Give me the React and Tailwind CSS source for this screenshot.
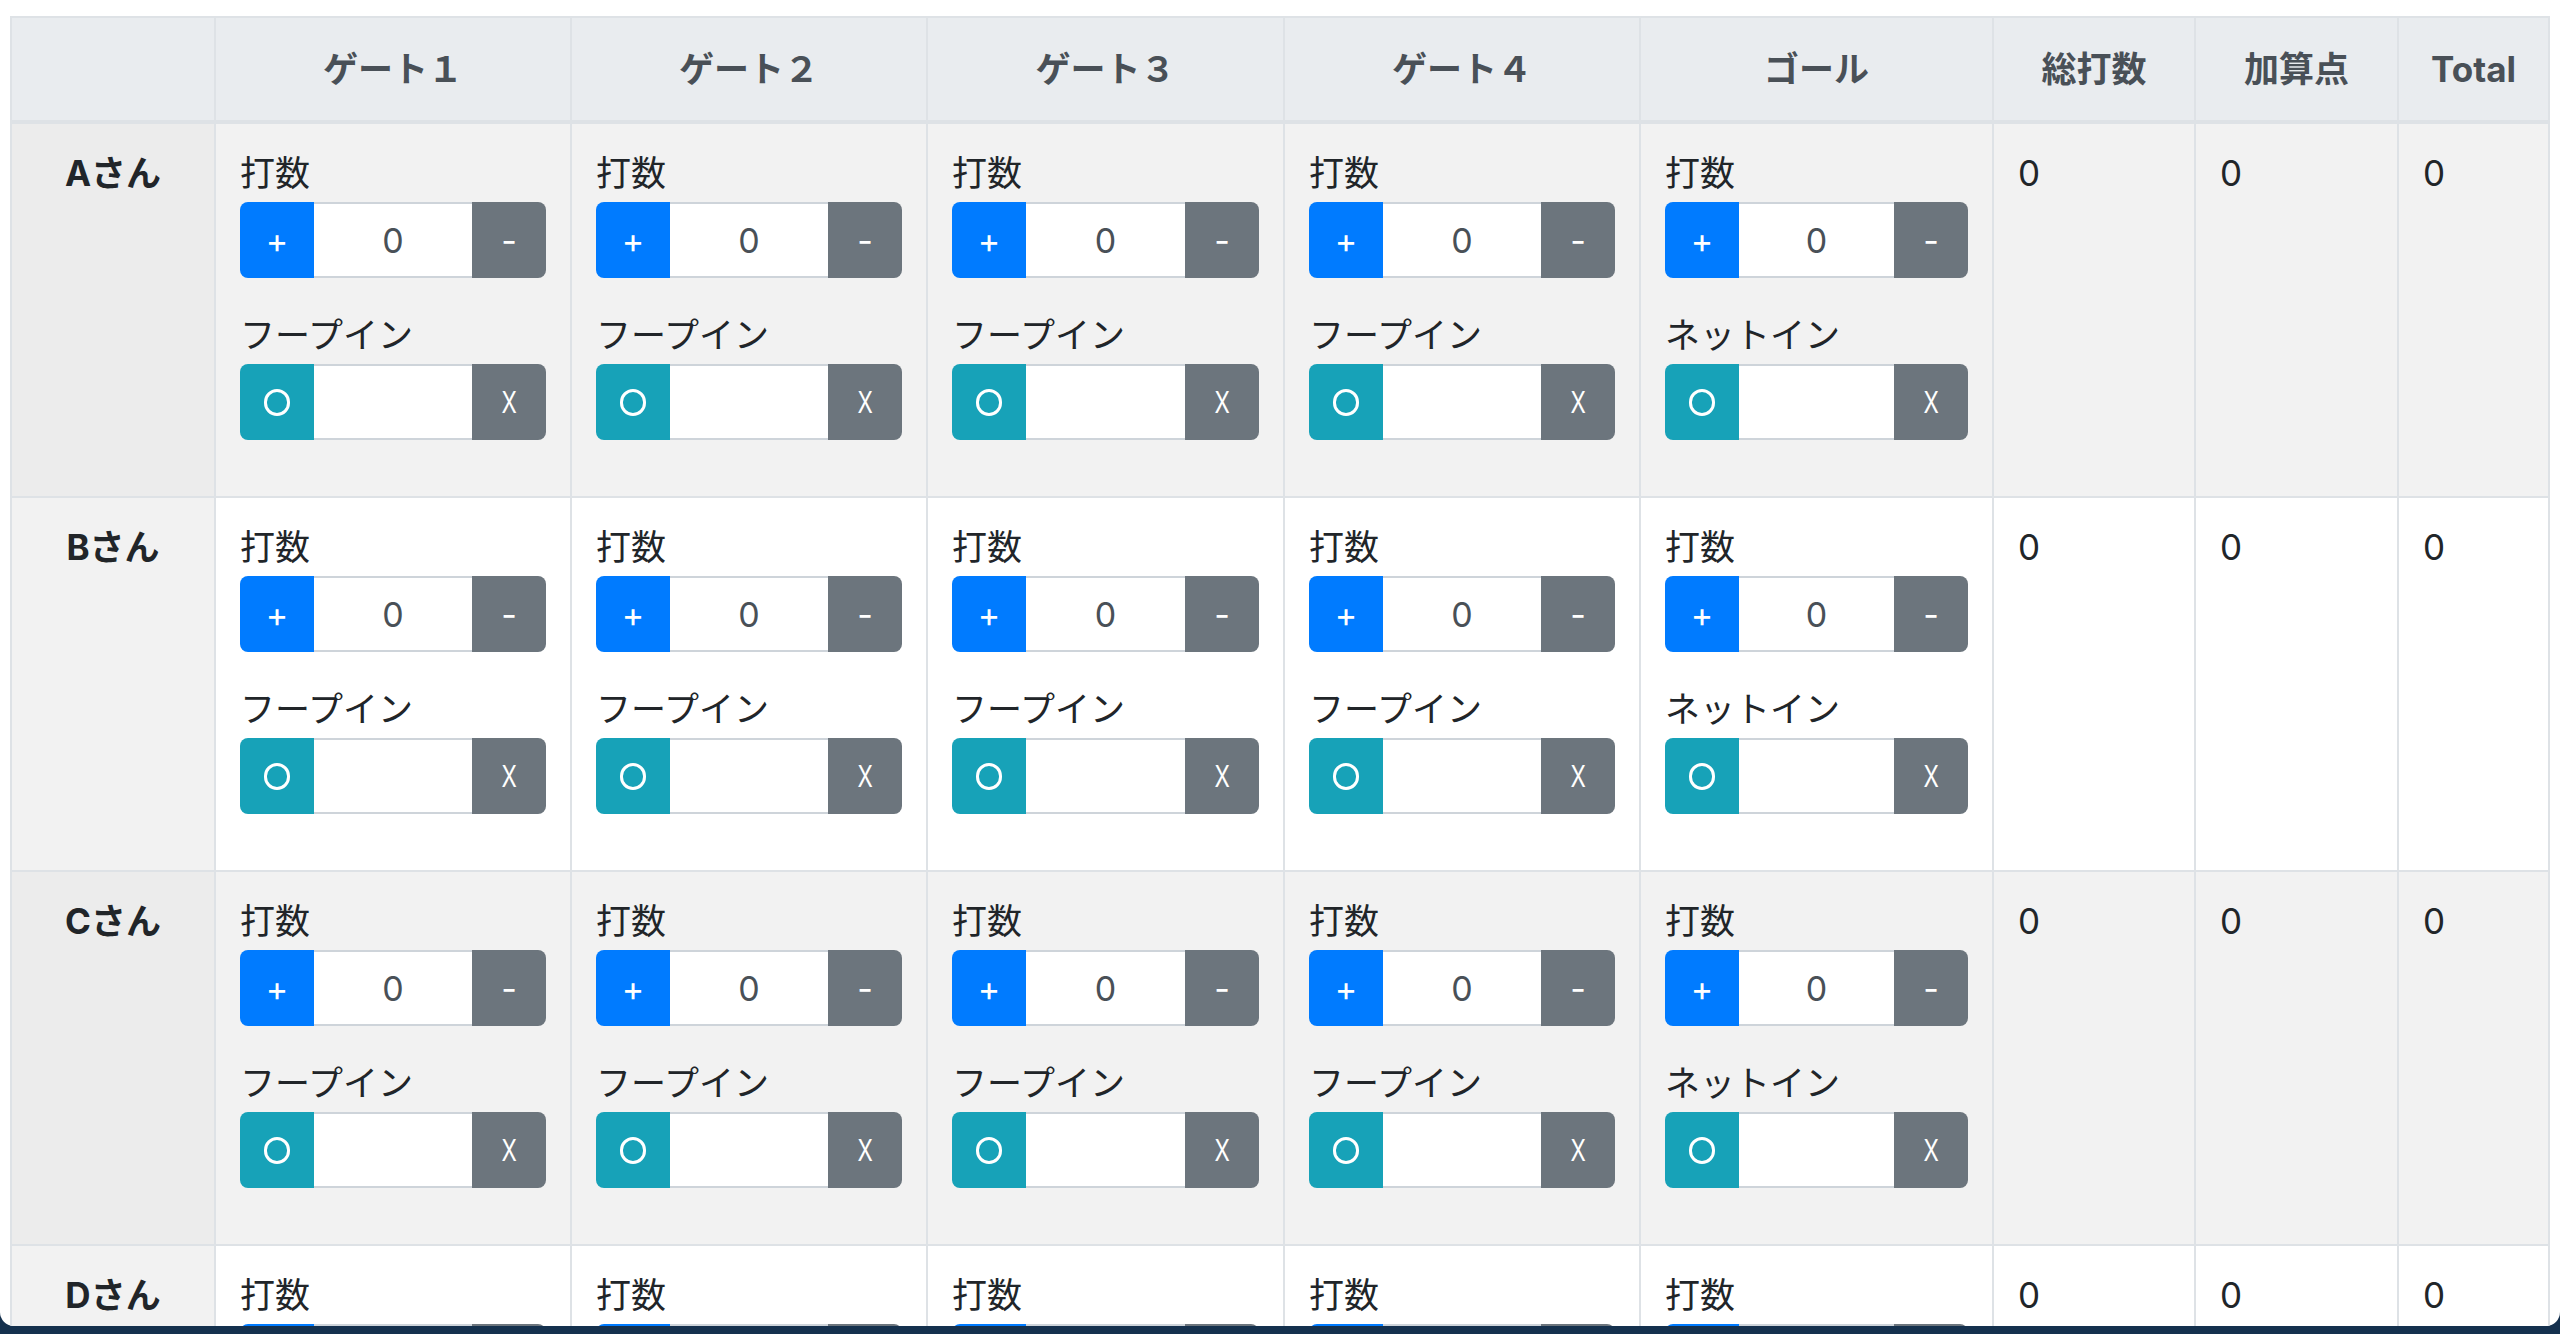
import React from "react";

const players = ["Aさん", "Bさん", "Cさん", "Dさん"];
const gates = [
  { title: "ゲート１", second: "フープイン" },
  { title: "ゲート２", second: "フープイン" },
  { title: "ゲート３", second: "フープイン" },
  { title: "ゲート４", second: "フープイン" },
  { title: "ゴール", second: "ネットイン" },
];

function StrokeGroup() {
  return (
    <div className="flex h-[76px] w-full">
      <div className="flex w-[74px] shrink-0 items-center justify-center rounded-l-[8px] bg-[#007bff] text-[34px] text-white">
        +
      </div>
      <div className="flex flex-1 items-center justify-center border-y-2 border-[#ced4da] bg-white text-[34px] text-[#495057]">
        0
      </div>
      <div className="flex w-[74px] shrink-0 items-center justify-center rounded-r-[8px] bg-[#6c757d] text-[34px] text-white">
        -
      </div>
    </div>
  );
}

function HoopGroup() {
  return (
    <div className="flex h-[76px] w-full">
      <div className="flex w-[74px] shrink-0 items-center justify-center rounded-l-[8px] bg-[#17a2b8] text-white">
        <span className="block h-[27px] w-[26px] rounded-full border-[3px] border-white"></span>
      </div>
      <div className="flex-1 border-y-2 border-[#ced4da] bg-white"></div>
      <div className="flex w-[74px] shrink-0 items-center justify-center rounded-r-[8px] bg-[#6c757d] text-[30px] text-white">
        <span className="inline-block scale-x-[0.75]">X</span>
      </div>
    </div>
  );
}

function GateCell({ second, striped }) {
  return (
    <td
      className={`border-2 border-[#dee2e6] p-6 align-top ${
        striped ? "bg-[#f2f2f2]" : "bg-white"
      }`}
    >
      <div className="h-[54px] text-[35px] leading-[50px] text-[#212529]">打数</div>
      <StrokeGroup />
      <div className="h-[32px]"></div>
      <div className="h-[54px] text-[35px] leading-[50px] text-[#212529]">{second}</div>
      <HoopGroup />
      <div className="h-[32px]"></div>
    </td>
  );
}

function ScoreCell({ striped }) {
  return (
    <td
      className={`border-2 border-[#dee2e6] p-6 align-top text-[35px] leading-[50px] text-[#212529] ${
        striped ? "bg-[#f2f2f2]" : "bg-white"
      }`}
    >
      0
    </td>
  );
}

export default function App() {
  return (
    <div className="h-[1334px] w-[2560px] overflow-hidden bg-[#15314e] font-['Inter','Noto_Sans_CJK_JP',sans-serif]">
      <div className="h-[1326px] w-full overflow-hidden rounded-b-[14px] bg-white pl-[10px] pt-[16px]">
        <table className="table-fixed border-collapse">
          <colgroup>
            <col className="w-[204px]" />
            <col className="w-[356px]" />
            <col className="w-[356px]" />
            <col className="w-[357px]" />
            <col className="w-[356px]" />
            <col className="w-[353px]" />
            <col className="w-[202px]" />
            <col className="w-[203px]" />
            <col className="w-[151px]" />
          </colgroup>
          <thead>
            <tr>
              <th className="border-2 border-b-4 border-[#dee2e6] bg-[#e9ecef] p-0">
                <div className="h-[102px]"></div>
              </th>
              {gates.map((g) => (
                <th
                  key={g.title}
                  className="border-2 border-b-4 border-[#dee2e6] bg-[#e9ecef] p-0 text-center text-[35px] font-bold text-[#495057]"
                >
                  <div className="flex h-[102px] items-center justify-center">{g.title}</div>
                </th>
              ))}
              {["総打数", "加算点", "Total"].map((t) => (
                <th
                  key={t}
                  className="border-2 border-b-4 border-[#dee2e6] bg-[#e9ecef] p-0 text-center text-[35px] font-bold text-[#495057]"
                >
                  <div className="flex h-[102px] items-center justify-center">{t}</div>
                </th>
              ))}
            </tr>
          </thead>
          <tbody>
            {players.map((p, i) => {
              const striped = i % 2 === 0;
              return (
                <tr key={p}>
                  <th
                    className={`border-2 border-[#dee2e6] p-6 text-center align-top text-[35px] font-bold leading-[50px] text-[#212529] ${
                      striped ? "bg-[#ececec]" : "bg-[#f2f2f2]"
                    }`}
                  >
                    {p}
                  </th>
                  {gates.map((g) => (
                    <GateCell key={g.title} second={g.second} striped={striped} />
                  ))}
                  <ScoreCell striped={striped} />
                  <ScoreCell striped={striped} />
                  <ScoreCell striped={striped} />
                </tr>
              );
            })}
          </tbody>
        </table>
      </div>
    </div>
  );
}
